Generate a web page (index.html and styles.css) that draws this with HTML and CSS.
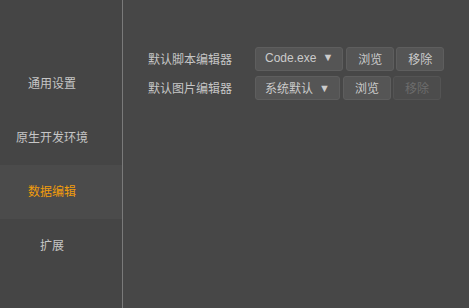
FILE: index.html
```html
<!DOCTYPE html>
<html lang="zh-CN">
<head>
  <meta charset="UTF-8" />
  <title>设置</title>
  <link rel="stylesheet" href="styles.css">
</head>
<body>
  <div class="settings">
    <!-- 左侧导航 -->
    <div class="sidebar">
      <div class="nav-item">通用设置</div>
      <div class="nav-item">原生开发环境</div>
      <div class="nav-item active">数据编辑</div>
      <div class="nav-item">扩展</div>
    </div>

    <!-- 右侧内容 -->
    <div class="content">
      <div class="row">
        <span class="label">默认脚本编辑器</span>
        <button class="btn select">Code.exe<span class="arrow">▼</span></button>
        <button class="btn">浏览</button>
        <button class="btn">移除</button>
      </div>
      <div class="row">
        <span class="label">默认图片编辑器</span>
        <button class="btn select">系统默认<span class="arrow">▼</span></button>
        <button class="btn">浏览</button>
        <button class="btn" disabled>移除</button>
      </div>
    </div>
  </div>
</body>
</html>
```

FILE: styles.css
```css
html, body {
  margin: 0;
  height: 100%;
  background-color: #474747;
  font-family: "Liberation Sans", "Noto Sans CJK SC", sans-serif;
  font-size: 12px;
  color: #c6c6c6;
}

.settings {
  display: flex;
  height: 100%;
}

.sidebar {
  width: 122px;
  padding-top: 57px;
  background-color: #454545;
  border-right: 1px solid #7a7a7a;
}

.nav-item {
  box-sizing: border-box;
  height: 54px;
  padding: 0 18px 3px 0;
  display: flex;
  align-items: center;
  justify-content: center;
}

.nav-item.active {
  background-color: #4b4b4b;
  color: #f09c0c;
}

.content {
  flex: 1;
  padding: 47px 0 0 25px;
}

.row {
  display: flex;
  align-items: center;
  height: 24px;
  margin-bottom: 5px;
}

.label {
  width: 107px;
  padding-bottom: 2px;
}

.btn {
  box-sizing: border-box;
  height: 24px;
  padding: 0 11px 2px;
  margin-right: 2px;
  font-family: inherit;
  font-size: 12px;
  color: #cbcbcb;
  background-color: #555555;
  border: 1px solid #5e5e5e;
  border-radius: 3px;
}

.btn.select {
  padding: 0 9px 2px;
  margin-right: 3px;
}

.arrow {
  display: inline-block;
  font-size: 11px;
  margin-left: 6px;
  transform: translateY(-1px);
}

.btn:disabled {
  color: #6c6c6c;
  background-color: #4c4c4c;
  border-color: #545454;
}
```
